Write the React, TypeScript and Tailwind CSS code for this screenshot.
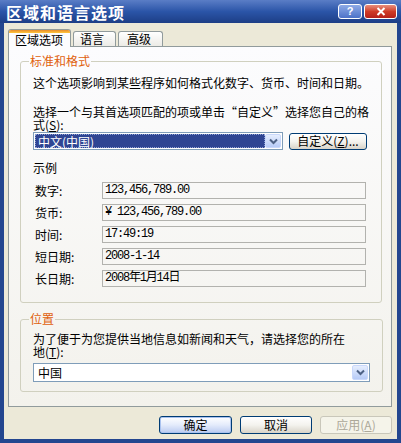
const Chevron = () => (
  <svg width="9" height="7" viewBox="0 0 9 7">
    <path d="M1 1.5 L4.5 5 L8 1.5" fill="none" stroke="#4d6185" strokeWidth="2" />
  </svg>
);

const DropButton = () => (
  <div className="w-[16px] h-full flex items-center justify-center border border-[#c9d8fb] rounded-[2px] bg-gradient-to-b from-[#e6eefe] to-[#b7cbf7]">
    <Chevron />
  </div>
);

type BtnProps = {
  children: React.ReactNode;
  className?: string;
  isDefault?: boolean;
  disabled?: boolean;
};

const XPButton = ({ children, className = "", isDefault, disabled }: BtnProps) => {
  let look =
    "border-[#003c74] bg-gradient-to-b from-[#ffffff] via-[#f4f3ee] to-[#d8d3c8] text-black";
  if (isDefault)
    look =
      "border-[#003c74] bg-gradient-to-b from-[#ffffff] via-[#e4ebfb] to-[#b9caf0] text-black shadow-[inset_0_0_0_1px_#a9c2ef]";
  if (disabled) look = "border-[#c9c7ba] bg-[#f5f4ea] text-[#aca899]";
  return (
    <div
      className={`rounded-[3px] border flex items-center justify-center text-[12px] leading-[12px] ${look} ${className}`}
    >
      {children}
    </div>
  );
};

const samples = [
  { label: "数字:", value: "123,456,789.00" },
  { label: "货币:", value: "¥ 123,456,789.00" },
  { label: "时间:", value: "17:49:19" },
  { label: "短日期:", value: "2008-1-14" },
  { label: "长日期:", value: "2008年1月14日" },
];

export default function App() {
  return (
    <div className="w-[401px] h-[443px] flex flex-col bg-[#23468f] font-['Noto_Sans_CJK_SC',sans-serif] text-[12px] leading-[13px] text-black select-none">
      {/* title bar */}
      <div className="h-[23px] flex items-center justify-between pl-[6px] pr-[4px] bg-gradient-to-b from-[#5a7dc6] via-[#2b55a8] to-[#1d3e86]">
        <span className="text-white font-bold text-[16px] leading-[18px] tracking-[1px]">区域和语言选项</span>
        <div className="flex items-center gap-[2px]">
          <div className="w-[24px] h-[15px] rounded-[3px] border border-white bg-gradient-to-b from-[#8eaae6] to-[#4d72c8] text-white font-bold text-[11px] leading-[13px] flex items-center justify-center font-['Liberation_Sans',sans-serif]">
            ?
          </div>
          <div className="w-[33px] h-[15px] rounded-[3px] border border-white bg-gradient-to-b from-[#e88d7c] via-[#cf3a26] to-[#b5201a] flex items-center justify-center">
            <svg width="10" height="9" viewBox="0 0 10 9">
              <path d="M1.5 1 L8.5 8 M8.5 1 L1.5 8" stroke="white" strokeWidth="2" />
            </svg>
          </div>
        </div>
      </div>

      {/* body */}
      <div className="flex-1 flex flex-col bg-[#ece9d8] mx-[4px] mb-[4px] pt-[6px] pl-[4px] pr-[5px]">
        {/* tabs */}
        <div className="h-[17px] flex items-end gap-[2px] relative z-10">
          <div className="w-[63px] h-[18px] -mb-[1px] border border-b-0 border-[#919b9c] rounded-t-[3px] bg-[#fcfcfe] flex flex-col overflow-hidden">
            <div className="h-[3px] bg-gradient-to-b from-[#e68b2c] to-[#ffc73c]" />
            <div className="flex-1 pl-[6px] leading-[13px]">区域选项</div>
          </div>
          <div className="w-[43px] h-[15px] border border-b-0 border-[#919b9c] rounded-t-[3px] bg-gradient-to-b from-[#ffffff] to-[#ecebe6] pl-[6px] leading-[14px]">
            语言
          </div>
          <div className="w-[45px] h-[15px] border border-b-0 border-[#919b9c] rounded-t-[3px] bg-gradient-to-b from-[#ffffff] to-[#ecebe6] pl-[8px] leading-[14px]">
            高级
          </div>
        </div>

        {/* tab page */}
        <div className="w-[384px] h-[361px] border border-[#919b9c] bg-gradient-to-b from-[#fcfcfe] to-[#f3f2ec] pt-[7px] pl-[11px] pr-[9px]">
          <fieldset className="border border-[#d0d0bf] rounded-[3px] px-[12px] pb-[15px]">
            <legend className="-ml-[4px] px-[1px] text-[#e0600c] leading-[14px]">标准和格式</legend>
            <p className="mt-[8px] whitespace-nowrap">这个选项影响到某些程序如何格式化数字、货币、时间和日期。</p>
            <p className="mt-[16px] whitespace-nowrap leading-[13px]">
              选择一个与其首选项匹配的项或单击“自定义”选择您自己的格
              <br />
              式(<span className="underline">S</span>):
            </p>
            <div className="mt-[1px] flex items-center gap-[6px]">
              <div className="w-[250px] h-[18px] border border-[#7f9db9] bg-white flex p-[1px]">
                <div className="flex-1 bg-[#2f4593] text-white pl-[2px] flex items-center border border-dotted border-[#8c9fd4]">
                  中文(中国)
                </div>
                <DropButton />
              </div>
              <XPButton className="w-[78px] h-[17px]">
                自定义(<span className="underline">Z</span>)...
              </XPButton>
            </div>
            <div className="mt-[11px]">示例</div>
            <div className="mt-[8px] flex flex-col gap-[5px]">
              {samples.map((s) => (
                <div key={s.label} className="flex items-center">
                  <div className="w-[69px] pl-[2px]">{s.label}</div>
                  <div className="w-[264px] h-[17px] border border-[#b2b2ae] flex items-center pl-[2px] font-['Liberation_Mono','Noto_Sans_CJK_SC',monospace] text-[12px] tracking-[-1.2px]">
                    {s.value}
                  </div>
                </div>
              ))}
            </div>
          </fieldset>

          <fieldset className="mt-[9px] border border-[#d0d0bf] rounded-[3px] px-[12px] pb-[9px]">
            <legend className="-ml-[4px] px-[1px] text-[#e0600c] leading-[14px]">位置</legend>
            <p className="mt-[6px] whitespace-nowrap">
              为了便于为您提供当地信息如新闻和天气，请选择您的所在
              <br />
              地(<span className="underline">T</span>):
            </p>
            <div className="mt-[5px] w-[337px] h-[19px] border border-[#7f9db9] bg-white flex p-[1px]">
              <div className="flex-1 pl-[3px] flex items-center">中国</div>
              <DropButton />
            </div>
          </fieldset>
        </div>

        {/* buttons */}
        <div className="mt-[9px] flex justify-end gap-[8px]">
          <XPButton className="w-[73px] h-[18px]" isDefault>
            确定
          </XPButton>
          <XPButton className="w-[72px] h-[18px]">取消</XPButton>
          <XPButton className="w-[72px] h-[18px]" disabled>
            应用(<span className="underline">A</span>)
          </XPButton>
        </div>
      </div>
    </div>
  );
}
